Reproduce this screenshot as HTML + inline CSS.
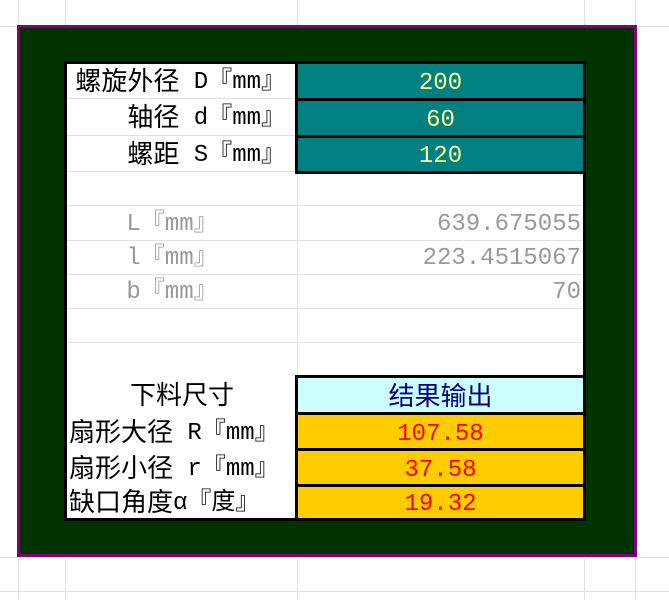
<!DOCTYPE html>
<html><head><meta charset="utf-8"><style>
body{margin:0;width:669px;height:600px;position:relative;background:#fff;overflow:hidden;font-family:"Liberation Mono","Noto Sans CJK SC",monospace}
.h{position:absolute;left:0;width:669px;height:1px;background:#e1e1e1}
.v{position:absolute;top:0;height:600px;width:1px;background:#e1e1e1}
.box{position:absolute;left:17px;top:25px;width:614px;height:526px;background:#003300;border:3px solid #800080}
.tbl{position:absolute;left:64px;top:61px;width:516px;height:454px;background:#fff;border:3px solid #000}
.c{position:absolute;font-size:24px;line-height:1;display:flex;align-items:center;box-sizing:border-box;white-space:nowrap}
.l{justify-content:flex-end;padding-right:12px;color:#000}
.g{color:#999}
.ih{position:absolute;height:1px;background:#e1e1e1}
.k{font-size:26px}
</style></head><body>
<div class="v" style="left:18px"></div><div class="v" style="left:65px"></div><div class="v" style="left:297px"></div><div class="v" style="left:584px"></div><div class="v" style="left:635px"></div>
<div class="h" style="top:26px"></div><div class="h" style="top:557px"></div><div class="h" style="top:591px"></div>
<div class="box"></div>
<div class="tbl"></div>
<div class="ih" style="left:67px;width:516px;top:98px"></div>
<div class="ih" style="left:67px;width:516px;top:135px"></div>
<div class="ih" style="left:67px;width:516px;top:171px"></div>
<div class="ih" style="left:67px;width:516px;top:205px"></div>
<div class="ih" style="left:67px;width:516px;top:240px"></div>
<div class="ih" style="left:67px;width:516px;top:274px"></div>
<div class="ih" style="left:67px;width:516px;top:308px"></div>
<div class="ih" style="left:67px;width:516px;top:342px"></div>
<div style="position:absolute;left:297px;top:171px;width:1px;height:205px;background:#e1e1e1"></div>
<div class="c l" style="left:67px;top:64px;width:230px;height:38px"><span class="k">螺旋外径</span>&nbsp;D『mm』</div>
<div class="c l" style="left:67px;top:99px;width:230px;height:40px"><span class="k">轴径</span>&nbsp;d『mm』</div>
<div class="c l" style="left:67px;top:136px;width:230px;height:39px"><span class="k">螺距</span>&nbsp;S『mm』</div>
<div class="c g" style="left:67px;top:206px;width:230px;height:37px;justify-content:center;padding-right:20px">L『mm』</div>
<div class="c g" style="left:67px;top:241px;width:230px;height:36px;justify-content:center;padding-right:20px">l『mm』</div>
<div class="c g" style="left:67px;top:275px;width:230px;height:36px;justify-content:center;padding-right:20px">b『mm』</div>
<div class="c g" style="left:298px;top:206px;width:283px;height:37px;justify-content:flex-end">639.675055</div>
<div class="c g" style="left:298px;top:241px;width:283px;height:36px;justify-content:flex-end">223.4515067</div>
<div class="c g" style="left:298px;top:275px;width:283px;height:36px;justify-content:flex-end">70</div>
<div class="c" style="left:67px;top:377px;width:230px;height:40px;justify-content:center"><span class="k">下料尺寸</span></div>
<div class="c" style="left:67px;top:414px;width:230px;height:39px;justify-content:flex-start;padding-left:2px"><span class="k">扇形大径</span>&nbsp;R『mm』</div>
<div class="c" style="left:67px;top:450px;width:230px;height:39px;justify-content:flex-start;padding-left:2px"><span class="k">扇形小径</span>&nbsp;r『mm』</div>
<div class="c" style="left:67px;top:486px;width:230px;height:36px;justify-content:flex-start;padding-left:2px"><span class="k">缺口角度</span>α『度』</div>
<div class="c" style="left:295px;top:61px;width:291px;height:40px;background:#008080;border:3px solid #000;justify-content:center;color:#ffff99;padding-top:5px">200</div>
<div class="c" style="left:295px;top:98px;width:291px;height:40px;background:#008080;border:3px solid #000;justify-content:center;color:#ffff99;padding-top:5px">60</div>
<div class="c" style="left:295px;top:135px;width:291px;height:39px;background:#008080;border:3px solid #000;justify-content:center;color:#ffff99;padding-top:5px">120</div>
<div class="c" style="left:295px;top:375px;width:291px;height:40px;background:#ccffff;border:3px solid #000;justify-content:center;color:#000080;padding-top:5px"><span class="k">结果输出</span></div>
<div class="c" style="left:295px;top:412px;width:291px;height:40px;background:#ffcc00;border:3px solid #000;justify-content:center;color:#ff0000;padding-top:5px">107.58</div>
<div class="c" style="left:295px;top:448px;width:291px;height:40px;background:#ffcc00;border:3px solid #000;justify-content:center;color:#ff0000;padding-top:5px">37.58</div>
<div class="c" style="left:295px;top:484px;width:291px;height:37px;background:#ffcc00;border:3px solid #000;justify-content:center;color:#ff0000;padding-top:5px">19.32</div>
</body></html>
